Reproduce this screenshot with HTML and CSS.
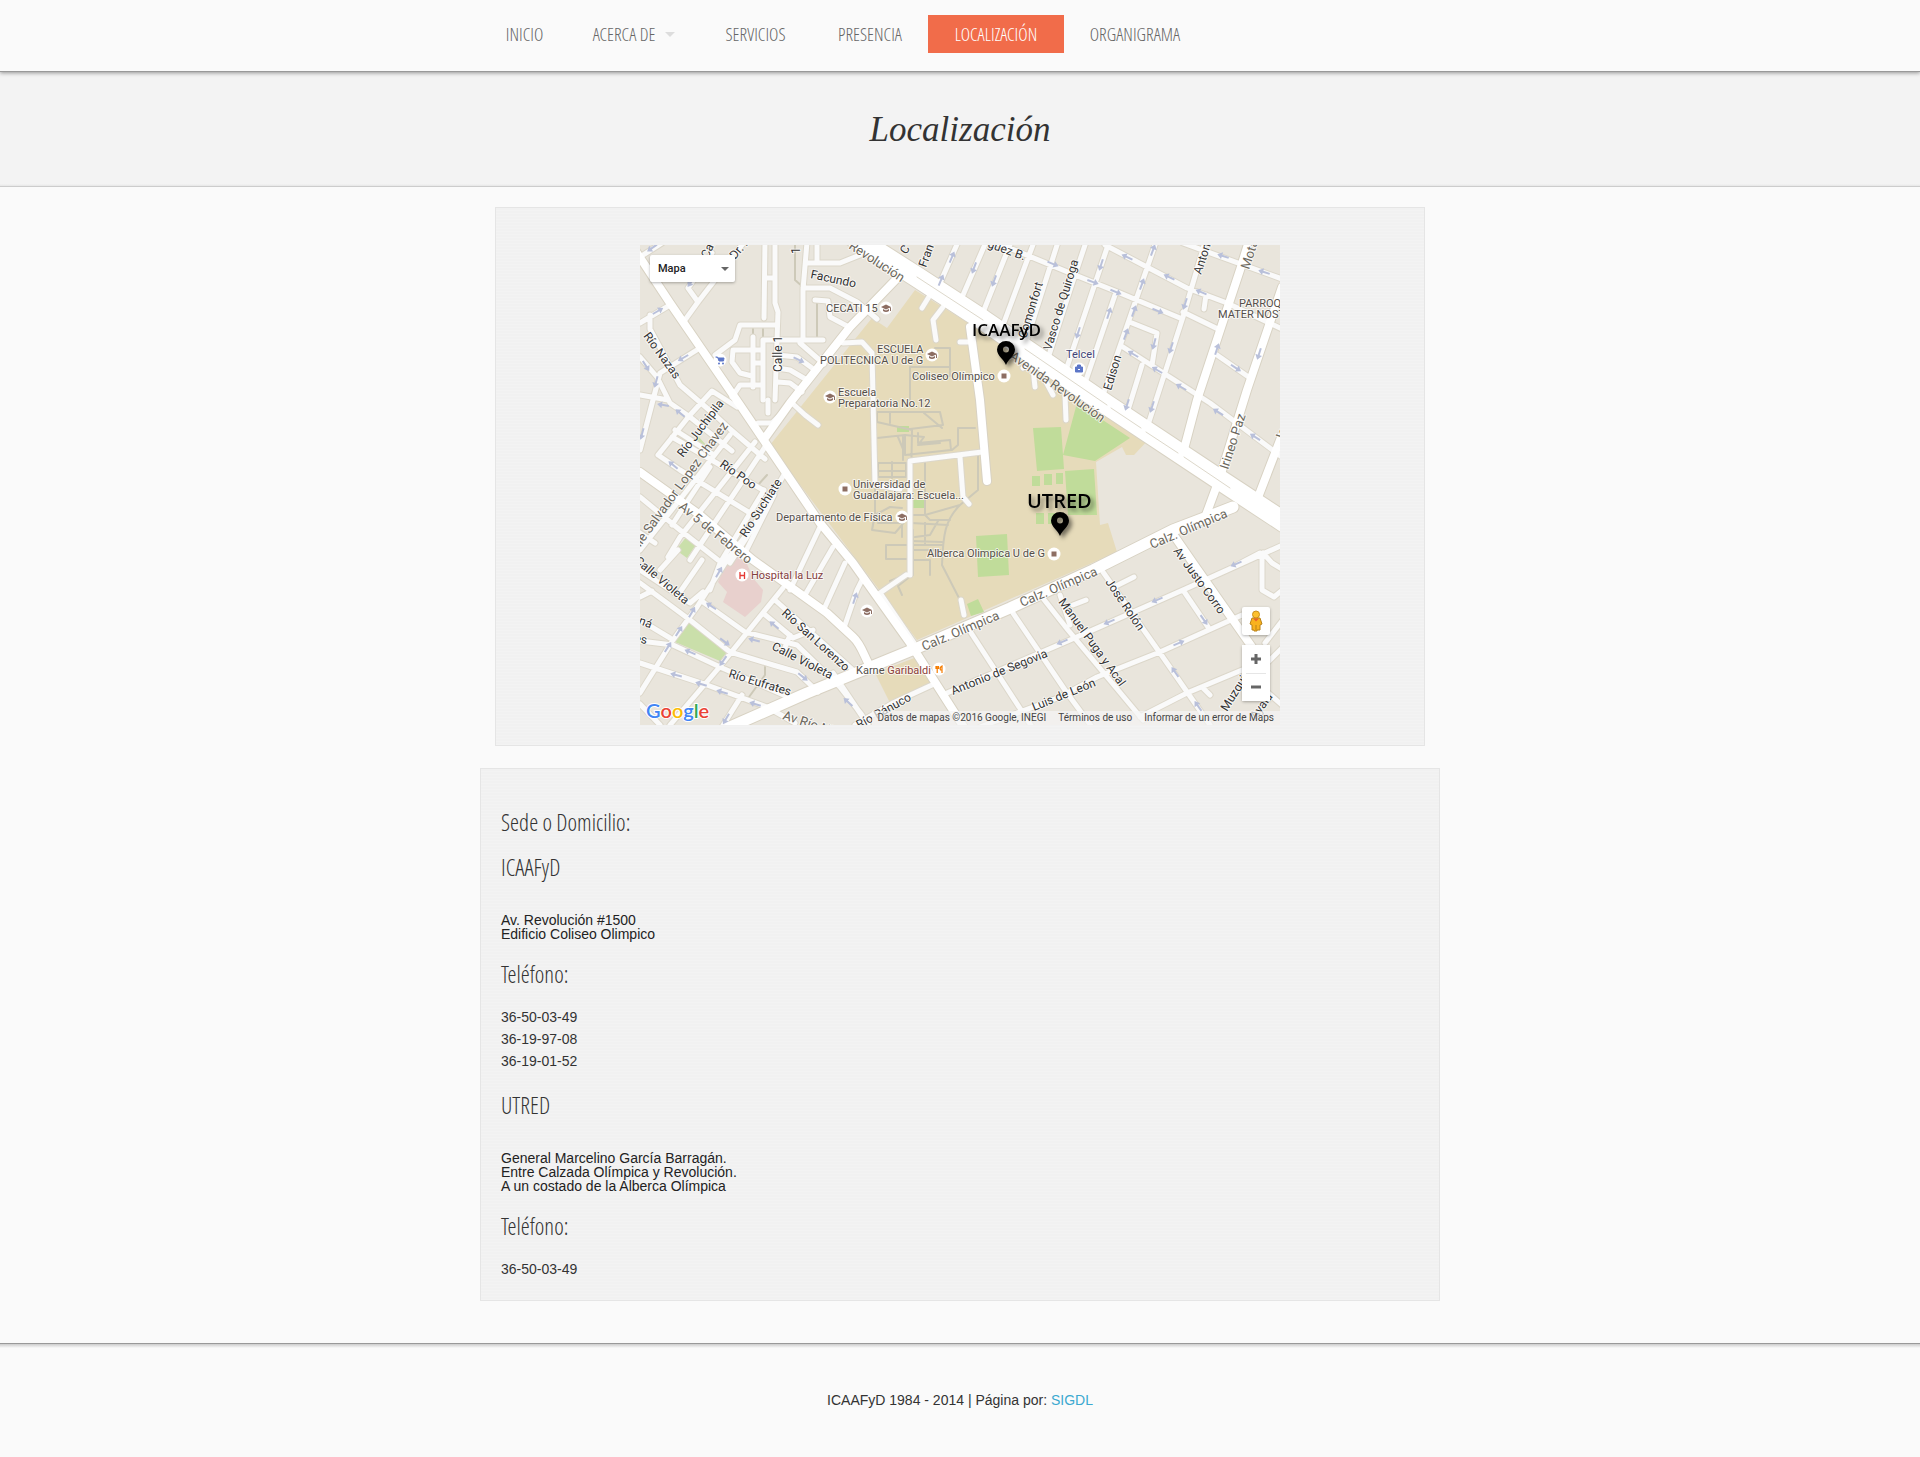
FILE: index.html
```html
<!DOCTYPE html>
<html lang="es">
<head>
<meta charset="utf-8">
<meta name="viewport" content="width=device-width, initial-scale=1">
<title>ICAAFyD - Localización</title>
<link rel="stylesheet" href="styles.css">
</head>
<body>
<header class="site-header">
  <nav class="menu" aria-label="Principal">
    <a href="#inicio">INICIO</a>
    <a href="#acerca" class="has-children">ACERCA DE</a>
    <a href="#servicios">SERVICIOS</a>
    <a href="#presencia">PRESENCIA</a>
    <a href="#localizacion" class="active" aria-current="page">LOCALIZACIÓN</a>
    <a href="#organigrama">ORGANIGRAMA</a>
  </nav>
</header>
<section class="page-title">
  <h1>Localización</h1>
</section>
<main class="content">
  <section class="panel map-panel">
    <div class="map">
      <svg class="map-canvas" viewBox="0 0 640 480" role="img" aria-label="Mapa de ICAAFyD y UTRED">
        <defs>
          <path id="arrow" d="M-6-1H1V-3.500L6 0L1 3.500V1H-6Z"/>
          <g id="cap"><circle r="6.500" fill="#fff"/><path d="M-5-1L0-3.500L5-1L0 1.500ZM-3 1V3Q0 5 3 3V1L0 2.500ZM4-1V3H5V-1Z" fill="#8d6e63"/></g>
          <g id="place"><circle r="6.500" fill="#fff"/><rect x="-2.500" y="-2.500" width="5" height="5" fill="#8d6e63"/></g>
          <path id="pin" fill-rule="evenodd" d="M0 24C-2 18-9 15-9 8.500A9 8.500 0 0 1 9 8.500C9 15 2 18 0 24ZM0 5.500A3 3 0 1 0 0 11.500A3 3 0 1 0 0 5.500Z"/>
          <path id="paths" d="M155 0V35L163 42M177 55V92M113 84V92M123 84V92M127 230L118 240M125 422V430L109 452M271 240L272 185L237 177V167H300L303 180L270 184M250 168V178M284 168L302 183M265 190L284 192L278 200L300 198M278 188V198L310 195L311 205L265 210V190L237 193M318 183V200L312 205M318 183L335 183M238 218H266V232H238ZM252 217V233M285 218V270L320 260L338 245V210M239 226H266M263 192V215M258 192L263 204M235 240V268L232 285L255 288L262 280L270 270H285L290 275L310 275M232 285L235 270L250 262L262 263M238 278H262V292M320 260C305 275 303 290 302 320L320 355M271 278L308 280M271 296L302 297M246 300H302M246 300V314H271M273 285V330M285 300V278M298 276L290 290L275 292M270 315H290V330M265 330L250 336M272 330L258 341L262 350M300 305H272M270 122V157M270 122H310V103H295M273 131H310M310 118V131M323 0"/>
          <path id="streets" d="M0 78L30 60M0 12L22-2M45 75L58 57L105-4M58 57L48 43L53 36L72 8M125-3L124 73M135-3V58L138 67L137 95L135 155M125 33H135M137 80H100L95 95L75 110M123 155V95H183M113 92V142M123 105H93L92 117L100 128L112 131M92 152L100 140H123M113 118H123M167-3L163 45V95M163 43H190L217 57L237 74M177-3V18M167 18H200L220 10M175 55L188 56L190 72L207 81M160 98L184 119M137 110L157 112L172 123M137 123L150 125L167 135M138 137L150 138L162 147M128 155V168M118 178H132L145 165M152 158L165 170L178 180M10 70V84L40 140L75 170L90 184L125 214M0 112L17 132L30 158L50 172L92 206M60 103L20 128L13 155L0 205M0 150L28 155M18 210L50 170L72 146L97 162M18 210L40 225L110 268M32 192L63 210L123 245M0 252L40 285L78 315M115 197L40 292L28 312M125 202L50 315M124 245L80 318L70 345M145 228L107 292L90 318M134 250L103 312M0 288L15 298M90 190L45 248L0 305M74 210L35 185M70 222L32 280M180 282L150 345M193 302L165 350M205 318L185 362M205 380L217 345L222 335M0 325L50 358L63 347M63 357L105 387L157 400L200 442L222 470M0 338L50 375L90 407L133 420L157 427L178 447M0 375L30 393M0 396L33 400L80 422L155 455M0 418L67 440L127 462L155 478M0 448L33 395L57 362L87 315L110 285M30 480L77 425L143 343M82 482L102 450M0 352L12 346M20 325L38 305M38 350L62 315M123 368L153 393L173 385M144 405L150 390M135 355L213 425M193 428L228 480M215 480L253 458L292 440M0 459L20 480M326 380L392 482M373 368L427 448L452 482M307 448L430 395L543 345L645 299M340 482L420 452L457 432L520 407L602 370M500 472L547 448L602 425L642 460M463 327L520 408L570 480M402 352L428 385L503 475M420 350L430 380M543 345L568 382M563 443L570 450M474 342L494 332M433 360L446 355M622 310V345L634 352L645 343M597 320L620 308M623 308L632 318L645 326M625 398L645 372M615 430L645 400M297 45L318-3M320 57L346-3M342 70L371-3M363 80L394-3M387 94L418-3M409 110L430 45L446-3M427 122L467 3M445 138L475 50M463 150L488 78L516-3M488 165L502 120M506 186L543 72L565-3M355-3L430 28L480 48L540 73M465 0L547 43L587 58L642 84M543-2L642 34M543 67L580 85M492 78L517 88L512 120M483 102L570 158L642 212M577 110L610 133M566 50L564 64M383 123L391 118M395 142L393 124M425 150L426 175M405 135L413 150M290 50L282 63M303 62L293 75L296 95M320 97H332M203 98L222 97L232 108L235 240L260 244M270 330V216L342 207M320 212L323 252L329 259M237 350L266 330M240 348L274 398M321 355L324 370"/>
          <path id="avenues" d="M-5 5L30 58L100 160L125 197L180 278L213 318L270 398L325 484M125 193L150 158L210 82L268 22M0 227L60 270L113 315L187 368L213 392C222 400 224 412 232 425M330 82L340 155L347 236M535 292L553 318L612 402M543 208L557 155L600 25L609-4M566 270L580 232L607 145L642 42M617 255L642 190"/>
          <path id="calzada" d="M90 482L167 448L277 403L370 363L453 325L533 285L593 262"/>
          <path id="revolucion" d="M208-12L277 32L343 75L467 160L580 235L650 281"/>
        </defs>
        <rect width="640" height="480" fill="#e9e5dc"/>
        <path fill="#e6dbba" d="M130 200L232 73L247 83L275 45L425 138L510 193L494 210H486L482 202L456 217L460 280L468 278L477 307L277 395ZM235 428L277 412L292 440L250 458Z"/>
        <path fill="#c0dc9a" d="M393 183L421 182L424 224L397 226ZM437 158L490 193L455 216L423 210ZM425 226L454 224L457 270H428ZM392 231H400V241H392ZM404 229H412V240H404ZM416 228H423V239H416ZM396 268H404V279H396ZM408 268H416V279H408ZM336 291L367 289L369 330L338 332ZM327 359L338 354L344 367L331 371ZM257 181H269V187H257ZM273 255H286V263H273Z"/>
        <path fill="#cadfaa" d="M58 191L67 201L60 208L53 203ZM47 291L57 298L47 313L36 305ZM50 375L89 404L80 416L35 397Z"/>
        <path fill="#e8d0cd" d="M92 306L104 312L113 333L123 345L121 357L105 372L83 357L87 347L78 337Z"/>
        <use href="#paths" class="road path"/>
        <use href="#streets" class="road street-case"/>
        <use href="#avenues" class="road avenue-case"/>
        <use href="#calzada" class="road calzada-case"/>
        <use href="#revolucion" class="road revolucion-case"/>
        <use href="#streets" class="road street"/>
        <use href="#avenues" class="road avenue"/>
        <use href="#calzada" class="road calzada"/>
        <use href="#revolucion" class="road revolucion"/>
        <path class="road median" d="M277 32L343 75M385 104L467 160M471 163L501 183M506 187L538 208M544 212L590 243"/>
        <g fill="#b9c0da">
          <use href="#arrow" transform="translate(12 3) rotate(145)"/>
          <use href="#arrow" transform="translate(51 37) rotate(125)"/>
          <use href="#arrow" transform="translate(18 66) rotate(-30)"/>
          <use href="#arrow" transform="translate(43 113) rotate(150)"/>
          <use href="#arrow" transform="translate(6 121) rotate(58)"/>
          <use href="#arrow" transform="translate(16 137) rotate(105)"/>
          <use href="#arrow" transform="translate(2 189) rotate(105)"/>
          <use href="#arrow" transform="translate(23 160) rotate(190)"/>
          <use href="#arrow" transform="translate(40 168) rotate(220)"/>
          <use href="#arrow" transform="translate(33 220) rotate(220)"/>
          <use href="#arrow" transform="translate(159 115) rotate(25)"/>
          <use href="#arrow" transform="translate(301 35) rotate(-67)"/>
          <use href="#arrow" transform="translate(312 12) rotate(-67)"/>
          <use href="#arrow" transform="translate(334 23) rotate(110)"/>
          <use href="#arrow" transform="translate(354 36) rotate(110)"/>
          <use href="#arrow" transform="translate(413 19) rotate(23)"/>
          <use href="#arrow" transform="translate(453 37) rotate(20)"/>
          <use href="#arrow" transform="translate(476 47) rotate(22)"/>
          <use href="#arrow" transform="translate(518 66) rotate(22)"/>
          <use href="#arrow" transform="translate(461 20) rotate(108)"/>
          <use href="#arrow" transform="translate(438 88) rotate(108)"/>
          <use href="#arrow" transform="translate(469 68) rotate(-72)"/>
          <use href="#arrow" transform="translate(487 12) rotate(205)"/>
          <use href="#arrow" transform="translate(529 32) rotate(205)"/>
          <use href="#arrow" transform="translate(561 47) rotate(203)"/>
          <use href="#arrow" transform="translate(583 11) rotate(198)"/>
          <use href="#arrow" transform="translate(624 27) rotate(198)"/>
          <use href="#arrow" transform="translate(513 5) rotate(-70)"/>
          <use href="#arrow" transform="translate(502 39) rotate(-70)"/>
          <use href="#arrow" transform="translate(494 66) rotate(-70)"/>
          <use href="#arrow" transform="translate(486 89) rotate(-70)"/>
          <use href="#arrow" transform="translate(514 99) rotate(105)"/>
          <use href="#arrow" transform="translate(531 103) rotate(108)"/>
          <use href="#arrow" transform="translate(545 59) rotate(108)"/>
          <use href="#arrow" transform="translate(493 109) rotate(210)"/>
          <use href="#arrow" transform="translate(517 125) rotate(210)"/>
          <use href="#arrow" transform="translate(541 142) rotate(210)"/>
          <use href="#arrow" transform="translate(577 104) rotate(-72)"/>
          <use href="#arrow" transform="translate(619 109) rotate(108)"/>
          <use href="#arrow" transform="translate(596 123) rotate(33)"/>
          <use href="#arrow" transform="translate(487 160) rotate(108)"/>
          <use href="#arrow" transform="translate(512 162) rotate(108)"/>
          <use href="#arrow" transform="translate(578 167) rotate(212)"/>
          <use href="#arrow" transform="translate(615 192) rotate(212)"/>
          <use href="#arrow" transform="translate(596 319) rotate(157)"/>
          <use href="#arrow" transform="translate(517 355) rotate(157)"/>
          <use href="#arrow" transform="translate(469 377) rotate(157)"/>
          <use href="#arrow" transform="translate(422 397) rotate(157)"/>
          <use href="#arrow" transform="translate(539 398) rotate(-23)"/>
          <use href="#arrow" transform="translate(564 375) rotate(55)"/>
          <use href="#arrow" transform="translate(535 427) rotate(-125)"/>
          <use href="#arrow" transform="translate(558 461) rotate(-125)"/>
          <use href="#arrow" transform="translate(79 327) rotate(-60)"/>
          <use href="#arrow" transform="translate(52 367) rotate(-60)"/>
          <use href="#arrow" transform="translate(39 386) rotate(-58)"/>
          <use href="#arrow" transform="translate(28 402) rotate(-58)"/>
          <use href="#arrow" transform="translate(71 361) rotate(213)"/>
          <use href="#arrow" transform="translate(85 397) rotate(37)"/>
          <use href="#arrow" transform="translate(83 416) rotate(125)"/>
          <use href="#arrow" transform="translate(50 407) rotate(203)"/>
          <use href="#arrow" transform="translate(36 430) rotate(195)"/>
          <use href="#arrow" transform="translate(61 439) rotate(197)"/>
          <use href="#arrow" transform="translate(82 447) rotate(197)"/>
          <use href="#arrow" transform="translate(115 459) rotate(197)"/>
          <use href="#arrow" transform="translate(86 474) rotate(120)"/>
          <use href="#arrow" transform="translate(114 395) rotate(195)"/>
          <use href="#arrow" transform="translate(134 380) rotate(220)"/>
          <use href="#arrow" transform="translate(163 432) rotate(38)"/>
          <use href="#arrow" transform="translate(208 457) rotate(222)"/>
          <use href="#arrow" transform="translate(215 353) rotate(-72)"/>
        </g>
        <g class="label street-name">
          <text transform="translate(68 14) rotate(-65)">Cal</text>
          <text transform="translate(95 15) rotate(-50)">Dr. R</text>
          <text transform="translate(160 9) rotate(-90)">1</text>
          <text transform="translate(170 33) rotate(12)">Facundo</text>
          <text transform="translate(142 127) rotate(-90)">Calle 1</text>
          <text transform="translate(3 91) rotate(54)">Río Nazas</text>
          <text transform="translate(43 213) rotate(-53)">Río Juchipila</text>
          <text transform="translate(79 221) rotate(35)">Río Poo</text>
          <text transform="translate(106 293) rotate(-57)">Río Suchiate</text>
          <text transform="translate(-6 317) rotate(40)">Calle Violeta</text>
          <text transform="translate(-8 376) rotate(22)">aná</text>
          <text transform="translate(-6 397) rotate(10)">es</text>
          <text transform="translate(141 369) rotate(42)">Río San Lorenzo</text>
          <text transform="translate(131 404) rotate(27)">Calle Violeta</text>
          <text transform="translate(88 432) rotate(17)">Río Eufrates</text>
          <text transform="translate(219 484) rotate(-29)">Río Pánuco</text>
          <text transform="translate(313 450) rotate(-22)">Antonio de Segovia</text>
          <text transform="translate(394 466) rotate(-22)">Luis de León</text>
          <text transform="translate(418 357) rotate(54)">Manuel Puga y Acal</text>
          <text transform="translate(465 337) rotate(56)">José Rolón</text>
          <text transform="translate(533 306) rotate(54)">Av Justo Corro</text>
          <text transform="translate(587 467) rotate(-58)">Muzquiz</text>
          <text transform="translate(616 475) rotate(-54)">Ayala</text>
          <text transform="translate(266 10) rotate(-56)">C</text>
          <text transform="translate(286 23) rotate(-70)">Fran</text>
          <text transform="translate(347 2) rotate(20)">guez B.</text>
          <text transform="translate(386 94) rotate(-73)">Comonfort</text>
          <text transform="translate(411 106) rotate(-73)">Vasco de Quiroga</text>
          <text transform="translate(471 146) rotate(-73)">Edison</text>
          <text transform="translate(561 30) rotate(-72)">Anton</text>
        </g>
        <g class="label avenue-name">
          <text transform="translate(208 3) rotate(33)">Revolución</text>
          <text transform="translate(369 113) rotate(35)">Avenida Revolución</text>
          <text transform="translate(284 406) rotate(-23)">Calz. Olímpica</text>
          <text transform="translate(382 362) rotate(-23)">Calz. Olímpica</text>
          <text transform="translate(512 304) rotate(-23)">Calz. Olímpica</text>
          <text transform="translate(588 225) rotate(-72)">Irineo Paz</text>
          <text transform="translate(609 25) rotate(-72)">Mota</text>
          <text transform="translate(643 198) rotate(-72)">José</text>
          <text transform="translate(38 263) rotate(39)">Av 5 de Febrero</text>
          <text transform="translate(-9 315) rotate(-54)">Calle Salvador Lopez Chavez</text>
          <text transform="translate(142 474) rotate(18)">Av Río Nilo</text>
        </g>
        <g class="label poi">
          <text x="186" y="67">CECATI 15</text>
          <text x="237" y="108">ESCUELA</text>
          <text x="180" y="119">POLITECNICA U de G</text>
          <text x="272" y="135">Coliseo Olímpico</text>
          <text x="198" y="151">Escuela</text>
          <text x="198" y="162">Preparatoria No.12</text>
          <text x="213" y="243">Universidad de</text>
          <text x="213" y="254">Guadalajara: Escuela...</text>
          <text x="136" y="276">Departamento de Física</text>
          <text x="287" y="312">Alberca Olimpica U de G</text>
          <text x="216" y="429">Karne <tspan fill="#8d4038">Garibaldi</tspan></text>
          <text x="599" y="62">PARROQUIA</text>
          <text x="578" y="73">MATER NOSTRA</text>
          <text x="426" y="113" fill="#3f4578">Telcel</text>
          <text x="111" y="334" fill="#854040">Hospital la Luz</text>
        </g>
        <use href="#cap" x="246" y="63"/><use href="#cap" x="292" y="110"/><use href="#cap" x="190" y="152"/><use href="#cap" x="262" y="272"/><use href="#cap" x="227" y="366"/>
        <use href="#place" x="364" y="131"/><use href="#place" x="205" y="244"/><use href="#place" x="414" y="309"/>
        <circle cx="102" cy="330" r="6.500" fill="#fff"/><path d="M100 327V334M104.500 327V334M100 330.500H104.500" stroke="#e53935" stroke-width="1.300"/>
        <circle cx="80" cy="115" r="6.500" fill="#fff"/><path d="M75.500 112H77.500L79 116H83.500L84 113H78" fill="#5c76c8" stroke="#5c76c8"/><circle cx="79" cy="118.500" r="1" fill="#5c76c8"/><circle cx="83" cy="118.500" r="1" fill="#5c76c8"/>
        <circle cx="439" cy="124" r="6.500" fill="#fff"/><path d="M435.500 122H442.500V127H435.500ZM437.500 122V120H440.500V122" fill="#5c76c8" stroke="#5c76c8"/><path d="M438 124.500H440" stroke="#fff"/>
        <circle cx="299" cy="424" r="6.500" fill="#fff"/><path d="M296 421V423.500H298.500V421M297.200 421V428M302 428V421C300 422 300 424 300.500 425H302" fill="none" stroke="#f57c00" stroke-width="1.200"/>
        <g class="marker">
          <text x="332" y="91" font-size="17">ICAAFyD</text>
          <use href="#pin" x="366" y="96"/>
          <text x="387" y="263" font-size="20">UTRED</text>
          <use href="#pin" x="420" y="267"/>
        </g>
        <text class="google" x="6" y="473"><tspan fill="#4285f4">G</tspan><tspan fill="#ea4335">o</tspan><tspan fill="#fbbc05">o</tspan><tspan fill="#4285f4">g</tspan><tspan fill="#34a853">l</tspan><tspan fill="#ea4335">e</tspan></text>
      </svg>
      <div class="map-type">
        <select aria-label="Tipo de mapa"><option>Mapa</option></select>
      </div>
      <div class="map-controls">
        <button class="pegman" aria-label="Street View">
          <svg width="14" height="22" viewBox="0 0 14 22"><path d="M3 8H11L13 14L11 15V20H8V21H5V20H3V15L1 14Z" fill="#f9b21d" stroke="#b98218"/><circle cx="7" cy="4.500" r="3.500" fill="#fcc02e" stroke="#c98e1c"/><path d="M4 8.500L7 11.500L10 8.500Z" fill="#e8622c"/><path d="M7 15V20" stroke="#b98218"/></svg>
        </button>
        <div class="zoom">
          <button aria-label="Acercar"><svg width="10" height="10" viewBox="0 0 10 10"><path d="M0 5H10M5 0V10" stroke="#666" stroke-width="3"/></svg></button>
          <button aria-label="Alejar"><svg width="10" height="10" viewBox="0 0 10 10"><path d="M0 5H10" stroke="#666" stroke-width="3"/></svg></button>
        </div>
      </div>
      <div class="map-credits">
        <span>Datos de mapas ©2016 Google, INEGI</span>
        <a href="#terminos">Términos de uso</a>
        <a href="#informar">Informar de un error de Maps</a>
      </div>
    </div>
  </section>
  <section class="panel address-panel">
    <h3>Sede o Domicilio:</h3>
    <h3>ICAAFyD</h3>
    <address>Av. Revolución #1500<br>Edificio Coliseo Olimpico</address>
    <h3>Teléfono:</h3>
    <p>36-50-03-49<br>36-19-97-08<br>36-19-01-52</p>
    <h3>UTRED</h3>
    <address>General Marcelino García Barragán.<br>Entre Calzada Olímpica y Revolución.<br>A un costado de la Alberca Olímpica</address>
    <h3>Teléfono:</h3>
    <p>36-50-03-49</p>
  </section>
</main>
<footer class="site-footer">
  <p>ICAAFyD 1984 - 2014 | Página por: <a href="#sigdl">SIGDL</a></p>
</footer>
</body>
</html>
```
FILE: styles.css
```css
* {
  box-sizing: border-box;
}

body {
  margin: 0;
  background: #fafafa;
  color: #333;
  font: 14px/22px Arial, "Liberation Sans", sans-serif;
}

h1,
h3,
p {
  margin: 0;
}

.site-header {
  position: relative;
  padding: 15px 20px 18px;
  border-bottom: 1px solid #999;
  box-shadow: 0 1px 4px rgba(0, 0, 0, 0.4);
}

.menu {
  display: grid;
  grid-template-columns: 89px 130px 113px 116px 136px 142px;
  width: 100%;
  max-width: 960px;
  margin: 0 auto;
}

.menu a {
  display: flex;
  align-items: center;
  justify-content: center;
  height: 38px;
  color: #666;
  font: 300 18px/22px "Open Sans Condensed Light", "Liberation Sans Narrow", sans-serif;
  text-decoration: none;
  white-space: nowrap;
}

.menu .active {
  background: #f16c4a;
  color: #fff;
}

.has-children::after {
  content: "";
  margin-left: 10px;
  border: 5px solid transparent;
  border-top-color: #ddd;
  border-bottom: 0;
}

.page-title {
  padding: 38px 20px 36px;
  background: linear-gradient(transparent, #e6e6e6) bottom / 100% 2px no-repeat #f3f3f3;
  border-bottom: 1px solid #ccc;
  text-align: center;
}

.page-title h1 {
  font: italic 400 35px/40px Georgia, "Liberation Serif", serif;
}

.content {
  display: flex;
  flex-direction: column;
  align-items: center;
  gap: 22px;
  padding: 20px 20px 42px;
}

.panel {
  width: 100%;
  border: 1px solid #e5e5e5;
  background: repeating-linear-gradient(#f1f1f1 0 2px, #f3f3f3 2px 3px);
}

.map-panel {
  max-width: 930px;
  padding: 37px 20px 20px;
}

.map {
  position: relative;
  max-width: 640px;
  margin: 0 auto;
}

.map-canvas {
  display: block;
  width: 100%;
  font-family: Roboto, sans-serif;
}

.road {
  fill: none;
  stroke-linecap: round;
  stroke-linejoin: round;
}

.path { stroke: #cdc9b8; stroke-width: 2px; }
.street-case { stroke: #dcd7ca; stroke-width: 7px; }
.street { stroke: #fafafa; stroke-width: 5px; }
.avenue-case { stroke: #d8d2c3; stroke-width: 10px; }
.avenue { stroke: #fff; stroke-width: 8px; }
.calzada-case { stroke: #d8d2c3; stroke-width: 13px; }
.calzada { stroke: #fff; stroke-width: 11px; }
.revolucion-case { stroke: #d8d2c3; stroke-width: 22px; }
.revolucion { stroke: #fff; stroke-width: 20px; }
.median { stroke: #ddd8cb; stroke-width: 1px; }

.label {
  paint-order: stroke;
  stroke: rgba(255, 255, 255, 0.7);
  stroke-width: 2px;
  stroke-linejoin: round;
}

.street-name { fill: #333; font-size: 12px; }
.avenue-name { fill: #6b675c; font-size: 13px; }
.poi { fill: #554f4a; font-size: 11px; }

.marker {
  fill: #000;
  font-family: "Open Sans", sans-serif;
  font-weight: 600;
  filter: drop-shadow(3px 3px 2px rgba(0, 0, 0, 0.5));
}

.google {
  font: 600 20px Lato, sans-serif;
  paint-order: stroke;
  stroke: #fff;
  stroke-width: 2px;
}

.map-type {
  position: absolute;
  top: 10px;
  left: 10px;
}

.map-type::after {
  content: "";
  position: absolute;
  top: 12px;
  right: 6px;
  border: 4px solid transparent;
  border-top-color: #666;
  border-bottom: 0;
  pointer-events: none;
}

.map-type select {
  display: block;
  width: 85px;
  height: 27px;
  padding: 0 8px;
  border: 0;
  border-radius: 2px;
  appearance: none;
  background: #fff;
  box-shadow: 0 1px 3px rgba(0, 0, 0, 0.3);
  color: #222;
  font: 500 11px/27px Roboto, sans-serif;
}

.map-controls {
  position: absolute;
  right: 10px;
  bottom: 24px;
  display: flex;
  flex-direction: column;
  gap: 10px;
}

.map-controls button {
  display: flex;
  align-items: center;
  justify-content: center;
  width: 28px;
  height: 28px;
  padding: 0;
  border: 0;
  background: #fff;
}

.map-controls .pegman,
.zoom {
  border-radius: 2px;
  box-shadow: 0 1px 3px rgba(0, 0, 0, 0.3);
}

.zoom button + button {
  background: linear-gradient(#e6e6e6, #e6e6e6) top / 20px 1px no-repeat #fff;
}

.map-credits {
  position: absolute;
  right: 0;
  bottom: 0;
  display: flex;
  gap: 12px;
  padding: 0 6px 0 5px;
  background: rgba(245, 245, 245, 0.7);
  color: #444;
  font: 10px/14px Roboto, sans-serif;
  white-space: nowrap;
}

.map-credits a {
  color: inherit;
  text-decoration: none;
}

.address-panel {
  max-width: 960px;
  padding: 38px 20px 20px;
}

.address-panel h3 {
  font: 300 23px/30px "Open Sans Condensed Light", "Liberation Sans Narrow", sans-serif;
}

.address-panel h3 + h3 {
  margin-top: 15px;
}

.address-panel address {
  margin: 31px 0 18px;
  color: #222;
  font-style: normal;
  line-height: 14px;
}

.address-panel p {
  margin-top: 17px;
}

.address-panel p + h3 {
  margin-top: 18px;
}

.site-footer {
  padding: 45px 20px;
  border-top: 1px solid #999;
  background: linear-gradient(#ccc, transparent) top / 100% 4px no-repeat;
  text-align: center;
}

.site-footer a {
  color: #3ba9d0;
  text-decoration: none;
}
```
